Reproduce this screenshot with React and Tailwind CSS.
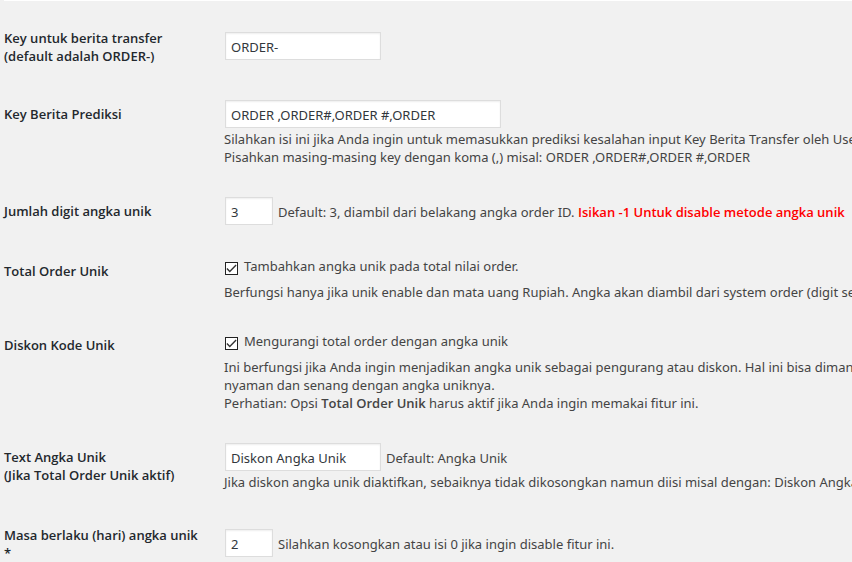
import React from "react";

const inputBase =
  "h-7 border border-[#ddd] bg-white px-[5px] pt-0.5 text-[13px] text-[#32373c] shadow-[inset_0_1px_2px_rgba(0,0,0,0.07)] outline-none";

function Row({ id, label, layout = "items-center", children }) {
  return (
    <div className={`flex ${layout}`}>
      <label
        htmlFor={id}
        className="w-[210px] shrink-0 self-start whitespace-pre-line pt-[19px] pb-[21px] pr-2 font-['Open_Sans','Segoe_UI',sans-serif] font-semibold text-[#23282d]"
      >
        {label}
      </label>
      <div className="min-w-0 flex-1 whitespace-nowrap pt-3.5 pr-2 pb-4 pl-2.5">{children}</div>
    </div>
  );
}

function Strong({ className = "", children }) {
  return (
    <strong className={`font-['Open_Sans','Segoe_UI',sans-serif] font-semibold ${className}`}>{children}</strong>
  );
}

function TextField({ id, value, width, note }) {
  return (
    <div className="flex h-[30px] items-start gap-[5px] pl-px">
      <input id={id} type="text" defaultValue={value} className={`${inputBase} ${width}`} />
      {note && <span className="pt-1.5">{note}</span>}
    </div>
  );
}

function CheckField({ id, text }) {
  return (
    <div className="flex items-start gap-1.5 pl-px">
      <span className="mt-[5px] grid size-[13px] shrink-0">
        <input
          id={id}
          type="checkbox"
          defaultChecked
          className="peer col-start-1 row-start-1 size-[13px] appearance-none border border-[#222] bg-white"
        />
        <svg
          viewBox="0 0 13 13"
          className="pointer-events-none col-start-1 row-start-1 hidden size-[13px] peer-checked:block"
          fill="none"
          stroke="#333"
          strokeWidth="1.4"
        >
          <path d="M1.9 6.4 L4.8 9.4 L11.1 3.1" />
        </svg>
      </span>
      <label htmlFor={id}>{text}</label>
    </div>
  );
}

export default function App() {
  return (
    <main className="min-h-screen overflow-hidden bg-[#f1f1f1] pl-1 font-['Noto_Sans','Open_Sans',sans-serif] text-[13px] leading-[18px] text-[#444]">
      <hr className="border-t border-white" />
      <form className="pt-[9px]">
        <Row id="key" label={"Key untuk berita transfer\n(default adalah ORDER-)"}>
          <TextField id="key" value="ORDER-" width="w-[156px]" />
        </Row>

        <Row id="prediksi" label="Key Berita Prediksi" layout="min-h-[97px] items-start">
          <TextField id="prediksi" value="ORDER ,ORDER#,ORDER #,ORDER" width="w-[276px]" />
          <p>
            Silahkan isi ini jika Anda ingin untuk memasukkan prediksi kesalahan input Key Berita Transfer oleh User
          </p>
          <p>Pisahkan masing-masing key dengan koma (,) misal: ORDER ,ORDER#,ORDER #,ORDER</p>
        </Row>

        <Row id="digit" label="Jumlah digit angka unik">
          <TextField
            id="digit"
            value="3"
            width="w-12"
            note={
              <>
                Default: 3, diambil dari belakang angka order ID.{" "}
                <Strong className="text-[#f00]">Isikan -1 Untuk disable metode angka unik</Strong>
              </>
            }
          />
        </Row>

        <Row id="total" label="Total Order Unik">
          <CheckField id="total" text="Tambahkan angka unik pada total nilai order." />
          <p className="mt-2">
            Berfungsi hanya jika unik enable dan mata uang Rupiah. Angka akan diambil dari system order (digit sesuai
          </p>
        </Row>

        <Row id="diskon" label="Diskon Kode Unik" layout="min-h-28 items-center">
          <CheckField id="diskon" text="Mengurangi total order dengan angka unik" />
          <p className="mt-2">
            Ini berfungsi jika Anda ingin menjadikan angka unik sebagai pengurang atau diskon. Hal ini bisa dimanfaatkan
          </p>
          <p>nyaman dan senang dengan angka uniknya.</p>
          <p>
            Perhatian: Opsi <Strong>Total Order Unik</Strong> harus aktif jika Anda ingin memakai fitur ini.
          </p>
        </Row>

        <Row id="teks" label={"Text Angka Unik\n(Jika Total Order Unik aktif)"}>
          <TextField id="teks" value="Diskon Angka Unik" width="w-[156px]" note="Default: Angka Unik" />
          <p>
            Jika diskon angka unik diaktifkan, sebaiknya tidak dikosongkan namun diisi misal dengan: Diskon Angka Unik
          </p>
        </Row>

        <Row id="masa" label={"Masa berlaku (hari) angka unik\n*"}>
          <TextField id="masa" value="2" width="w-12" note="Silahkan kosongkan atau isi 0 jika ingin disable fitur ini." />
        </Row>
      </form>
    </main>
  );
}
